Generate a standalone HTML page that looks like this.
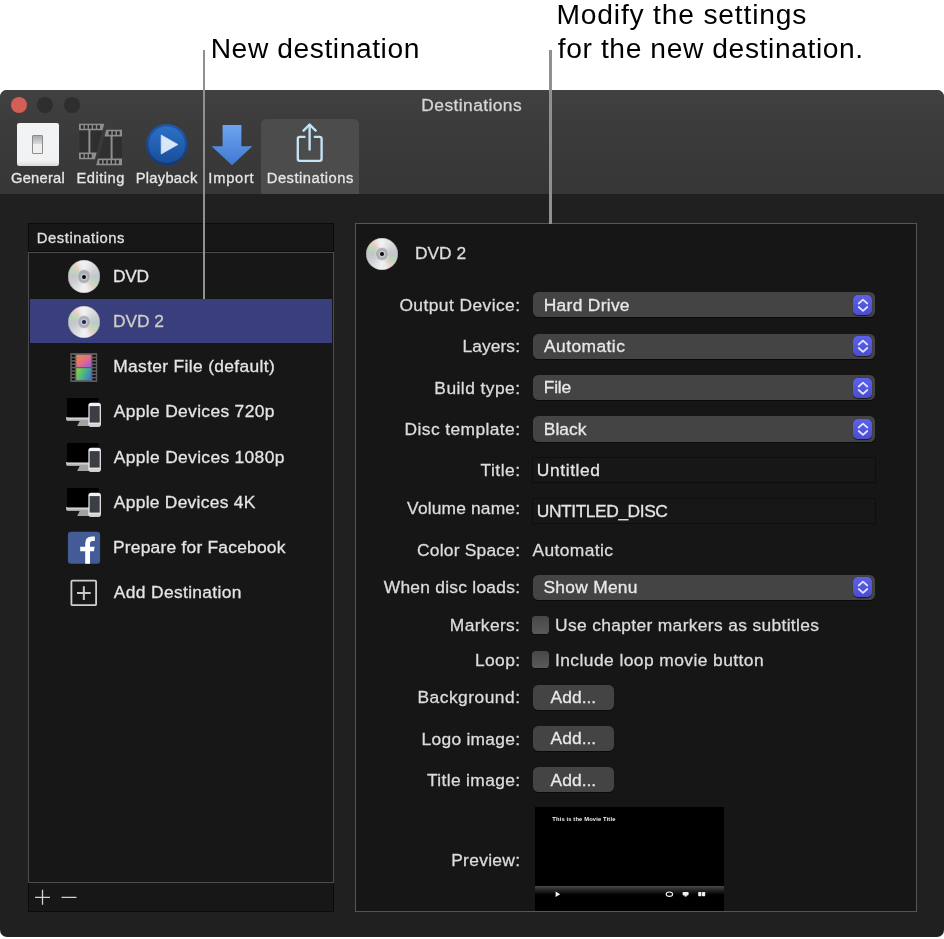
<!DOCTYPE html>
<html><head><meta charset="utf-8"><title>Destinations</title>
<style>
html,body{margin:0;padding:0;background:#fff;}
body{width:944px;height:939px;position:relative;overflow:hidden;font-family:"Liberation Sans",sans-serif;}
.t{position:absolute;white-space:nowrap;line-height:1;will-change:transform;}
.abs{position:absolute;}
#win{position:absolute;left:0;top:89.8px;width:944px;height:847.2px;background:#202020;border-radius:7px;overflow:hidden;}
#tb{position:absolute;left:0;top:0;width:944px;height:104.4px;background:linear-gradient(#414141,#3c3c3c 30%,#363636);}
.dot{position:absolute;width:16px;height:16px;border-radius:50%;}
#seltab{position:absolute;left:260.8px;top:119.2px;width:98.2px;height:75px;background:#4c4c4c;border-radius:5.5px 5.5px 0 0;}
#gen{position:absolute;left:16.8px;top:123.4px;width:42.4px;height:42.4px;border-radius:2.2px;background:linear-gradient(#f2f3f5 0%,#f1f2f4 88%,#d9dadc 100%);}
#sw{position:absolute;left:15.2px;top:11.4px;width:9px;height:17.4px;border:1px solid #8c8c8c;border-radius:1px;background:linear-gradient(#a9abad 0%,#d8d9da 45%,#efefef 50%,#efefef 100%);}
#lhead{position:absolute;left:28.3px;top:223.4px;width:305.6px;height:28.4px;box-sizing:border-box;background:#171717;border:1.2px solid #0b0b0b;}
#lbox{position:absolute;left:28.3px;top:251.8px;width:305.6px;height:631px;box-sizing:border-box;background:#171717;border:1.6px solid #4c4c4c;}
#lfoot{position:absolute;left:28.3px;top:882.8px;width:305.6px;height:29.2px;box-sizing:border-box;background:#171717;border:1.2px solid #0b0b0b;border-top:none;}
#selrow{position:absolute;left:29.6px;top:299.0px;width:302.9px;height:43.6px;background:#393e7c;}
.disc{position:absolute;width:32.4px;height:32.4px;border-radius:50%;
 background:conic-gradient(from 0deg,#f2f2f3 0deg,#e2e3e5 30deg,#cfd1d5 60deg,#c3c5ca 90deg,#b9d8bc 115deg,#e4cfc5 140deg,#ececee 165deg,#f0f0f1 185deg,#dcdde0 215deg,#cacccf 245deg,#c3c5ca 270deg,#b9d8bc 295deg,#e6cec2 320deg,#ededee 345deg,#f2f2f3 360deg);
 box-shadow:inset 0 0 0 0.6px rgba(120,120,130,0.55);}
.disc i{position:absolute;left:10px;top:10px;width:12.4px;height:12.4px;border-radius:50%;background:#abaeb5;box-shadow:0 0 0 0.8px #d6d8dc;}
.disc b{position:absolute;left:14.2px;top:14.2px;width:4px;height:4px;border-radius:50%;box-shadow:0 0 0 1.4px #c3c6cb;}
#panel{position:absolute;left:355.1px;top:223.1px;width:561.5px;height:689.1px;box-sizing:border-box;background:#161616;border:1.6px solid #555555;}
.pop{position:absolute;left:532.8px;width:342.2px;height:25.3px;border-radius:5.5px;background:#444444;box-shadow:0 1px 0.5px #0a0a0a;}
.stp{position:absolute;right:2.6px;top:2.7px;width:19.6px;height:20px;border-radius:5px;background:linear-gradient(#5c61ea,#4a4dd0);box-shadow:0 0.6px 0.8px rgba(0,0,0,0.6);}
.stp svg{position:absolute;left:-0.2px;top:0;}
.fld{position:absolute;left:532.0px;width:343.6px;height:25.6px;box-sizing:border-box;background:#171717;border:1.2px solid #0e0e0e;}
.cb{position:absolute;left:532.1px;width:17.2px;height:17.4px;border-radius:3.6px;background:linear-gradient(#474747,#5a5a5a);box-shadow:0 0.8px 0.6px #0a0a0a;}
.btn{position:absolute;left:532.8px;width:80.8px;height:24.6px;border-radius:5.5px;background:#444444;box-shadow:0 1px 0.5px #0a0a0a;}
#prev{position:absolute;left:535.2px;top:807.2px;width:188.8px;height:103.4px;background:#000;overflow:hidden;}
#pbar{position:absolute;left:0;top:79.2px;width:100%;height:9px;background:linear-gradient(#4a4a4a,#2c2c2c 35%,#000 100%);}
.cl{position:absolute;width:2.5px;background:#909090;}
</style></head>
<body>
<div class="t" style="left:210px;padding-left:0.69px;top:32px;line-height:32px;font-size:28.20px;letter-spacing:0.580px;color:#000;">New destination</div>
<div class="t" style="left:556px;padding-left:0.49px;top:-2px;line-height:32px;font-size:28.20px;letter-spacing:0.826px;color:#000;">Modify the settings</div>
<div class="t" style="left:557px;padding-left:0.80px;top:32px;line-height:32px;font-size:28.20px;letter-spacing:0.604px;color:#000;">for the new destination.</div>
<div id="win"><div id="tb"></div></div>
<div class="dot" style="left:10.6px;top:96.9px;background:#d35f54"></div>
<div class="dot" style="left:37.1px;top:96.9px;background:#2e2e2e"></div>
<div class="dot" style="left:63.6px;top:96.9px;background:#2e2e2e"></div>
<div class="t" style="left:421px;padding-left:0.37px;top:95px;line-height:20px;font-size:17.40px;letter-spacing:0.414px;color:#d6d6d6;-webkit-text-stroke:0.3px currentColor;">Destinations</div>
<div id="seltab"></div>
<div id="gen"><div id="sw"></div></div>
<svg class="abs" style="left:78px;top:122px" width="46" height="46" viewBox="78 122 46 46">
<g fill="#2f2f31">
<polygon points="79.5,124.5 104,124.5 95,159 79.5,159"/>
<polygon points="106,130.5 122,130.5 122,165 96.5,165"/>
</g>
<g fill="#8e8e8e">
<polygon points="79,123.8 104.3,123.8 102.6,130.2 79,130.2"/>
<polygon points="79,152.6 96.6,152.6 95,159.2 79,159.2"/>
<polygon points="106.2,129.8 122,129.8 122,136.4 104.5,136.4"/>
<polygon points="98,158.6 122,158.6 122,165.2 96.2,165.2"/>
<rect x="88.4" y="130" width="2" height="23"/>
<rect x="110.6" y="136" width="2" height="23"/>
</g>
<g fill="#2a2a2c">

<rect x="80.8" y="125.2" width="2.7" height="3.5"/><rect x="84.9" y="125.2" width="2.7" height="3.5"/><rect x="89.0" y="125.2" width="2.7" height="3.5"/><rect x="93.1" y="125.2" width="2.7" height="3.5"/><rect x="97.2" y="125.2" width="2.7" height="3.5"/>
<rect x="80.8" y="154.2" width="2.7" height="3.5"/><rect x="84.9" y="154.2" width="2.7" height="3.5"/><rect x="89.0" y="154.2" width="2.7" height="3.5"/>
<rect x="108.6" y="131.3" width="2.7" height="3.5"/><rect x="112.8" y="131.3" width="2.7" height="3.5"/><rect x="117.0" y="131.3" width="2.7" height="3.5"/>
<rect x="99.4" y="160.2" width="2.7" height="3.5"/><rect x="103.6" y="160.2" width="2.7" height="3.5"/><rect x="107.8" y="160.2" width="2.7" height="3.5"/><rect x="112.0" y="160.2" width="2.7" height="3.5"/><rect x="116.2" y="160.2" width="2.7" height="3.5"/>
</g></svg>
<svg class="abs" style="left:144px;top:122px" width="46" height="46" viewBox="144 122 46 46">
<defs><linearGradient id="pg" x1="0" y1="0" x2="0" y2="1"><stop offset="0" stop-color="#2d70c8"/><stop offset="1" stop-color="#194e9a"/></linearGradient>
<linearGradient id="pg2" x1="0" y1="0" x2="0" y2="1"><stop offset="0" stop-color="#1f5aae"/><stop offset="1" stop-color="#103a78"/></linearGradient></defs>
<circle cx="166.9" cy="144.7" r="20.7" fill="url(#pg2)"/>
<circle cx="166.9" cy="144.7" r="18.3" fill="url(#pg)"/>
<path d="M161.2 135 L177.9 144.5 L161.2 154 Z" fill="#d9e5fa" stroke="#d9e5fa" stroke-width="0.7" stroke-linejoin="round"/>
</svg>
<svg class="abs" style="left:208px;top:122px" width="48" height="46" viewBox="208 122 48 46">
<defs><linearGradient id="ig" x1="0" y1="0" x2="0" y2="1"><stop offset="0" stop-color="#6ea4ee"/><stop offset="1" stop-color="#4278d2"/></linearGradient></defs>
<path d="M222.6 125 H241.4 V146.2 H252.3 L232 165.2 L211.6 146.2 H222.6 Z" fill="url(#ig)"/>
</svg>
<svg class="abs" style="left:290px;top:120px" width="40" height="46" viewBox="290 120 40 46">
<g fill="none" stroke="#c4e4f6" stroke-width="2.35" stroke-linecap="round" stroke-linejoin="round">
<path d="M304.5 136.8 H299.8 Q297.8 136.8 297.8 138.8 V158.8 Q297.8 160.8 299.8 160.8 H319.6 Q321.6 160.8 321.6 158.8 V138.8 Q321.6 136.8 319.6 136.8 H314.8"/>
<path d="M309.6 149.6 V125.2"/>
<path d="M303.5 130.7 L309.6 124.6 L315.7 130.7"/>
</g></svg>
<div class="t" style="left:10px;padding-left:0.96px;top:170px;line-height:16px;font-size:14.70px;letter-spacing:0.260px;color:#e6e6e6;-webkit-text-stroke:0.3px currentColor;">General</div>
<div class="t" style="left:76px;padding-left:0.49px;top:170px;line-height:16px;font-size:14.70px;letter-spacing:0.505px;color:#e6e6e6;-webkit-text-stroke:0.3px currentColor;">Editing</div>
<div class="t" style="left:135px;padding-left:0.69px;top:170px;line-height:16px;font-size:14.70px;letter-spacing:0.282px;color:#e6e6e6;-webkit-text-stroke:0.3px currentColor;">Playback</div>
<div class="t" style="left:208px;padding-left:0.34px;top:170px;line-height:16px;font-size:14.70px;letter-spacing:0.748px;color:#e6e6e6;-webkit-text-stroke:0.3px currentColor;">Import</div>
<div class="t" style="left:266px;padding-left:0.79px;top:170px;line-height:16px;font-size:14.70px;letter-spacing:0.518px;color:#e6e6e6;-webkit-text-stroke:0.3px currentColor;">Destinations</div>
<div id="lhead"></div><div id="lbox"></div><div id="lfoot"></div><div id="selrow"></div>
<div class="t" style="left:36px;padding-left:0.79px;top:230px;line-height:16px;font-size:14.80px;letter-spacing:0.572px;color:#e0e0e0;-webkit-text-stroke:0.3px currentColor;">Destinations</div>
<div class="disc" style="left:67.70px;top:260.40px"><i></i><b style="background:#0c0c0c"></b></div>
<div class="disc" style="left:67.70px;top:305.50px"><i></i><b style="background:#1d2150"></b></div>
<div class="t" style="left:112px;padding-left:0.97px;top:266px;line-height:20px;font-size:17.40px;letter-spacing:-0.279px;color:#e4e4e4;-webkit-text-stroke:0.3px currentColor;">DVD</div>
<div class="t" style="left:112px;padding-left:0.97px;top:311px;line-height:20px;font-size:17.40px;letter-spacing:-0.054px;color:#cfcdc6;-webkit-text-stroke:0.3px currentColor;">DVD 2</div>
<div class="t" style="left:113px;padding-left:0.27px;top:356px;line-height:20px;font-size:17.40px;letter-spacing:0.339px;color:#e4e4e4;-webkit-text-stroke:0.3px currentColor;">Master File (default)</div>
<div class="t" style="left:113px;padding-left:0.87px;top:401px;line-height:20px;font-size:17.40px;letter-spacing:0.340px;color:#e4e4e4;-webkit-text-stroke:0.3px currentColor;">Apple Devices 720p</div>
<div class="t" style="left:113px;padding-left:0.87px;top:447px;line-height:20px;font-size:17.40px;letter-spacing:0.339px;color:#e4e4e4;-webkit-text-stroke:0.3px currentColor;">Apple Devices 1080p</div>
<div class="t" style="left:113px;padding-left:0.87px;top:492px;line-height:20px;font-size:17.40px;letter-spacing:0.278px;color:#e4e4e4;-webkit-text-stroke:0.3px currentColor;">Apple Devices 4K</div>
<div class="t" style="left:112px;padding-left:0.97px;top:537px;line-height:20px;font-size:17.40px;letter-spacing:0.225px;color:#e4e4e4;-webkit-text-stroke:0.3px currentColor;">Prepare for Facebook</div>
<div class="t" style="left:113px;padding-left:0.87px;top:582px;line-height:20px;font-size:17.40px;letter-spacing:0.343px;color:#e4e4e4;-webkit-text-stroke:0.3px currentColor;">Add Destination</div>
<svg class="abs" style="left:68px;top:351px" width="32" height="33" viewBox="68 351 32 33">
<defs>
<linearGradient id="m1" x1="0" y1="0" x2="1" y2="1"><stop offset="0" stop-color="#f08a3c"/><stop offset="0.55" stop-color="#e06c8c"/><stop offset="1" stop-color="#9a58d8"/></linearGradient>
<linearGradient id="m2" x1="0" y1="0.3" x2="1" y2="0.7"><stop offset="0" stop-color="#8ccc4c"/><stop offset="0.45" stop-color="#4cba7c"/><stop offset="1" stop-color="#3c78d4"/></linearGradient>
</defs>
<rect x="70.3" y="353.1" width="26.9" height="28.8" fill="#5e5e5e"/>
<rect x="76.4" y="354.8" width="14.8" height="12.2" fill="url(#m1)"/>
<rect x="76.4" y="368.2" width="14.8" height="11.9" fill="url(#m2)"/>
<g fill="#0a0a0a">
<rect x="71.8" y="355.00" width="3.2" height="1.7"/><rect x="92.6" y="355.00" width="3.2" height="1.7"/>
<rect x="71.8" y="358.36" width="3.2" height="1.7"/><rect x="92.6" y="358.36" width="3.2" height="1.7"/>
<rect x="71.8" y="361.72" width="3.2" height="1.7"/><rect x="92.6" y="361.72" width="3.2" height="1.7"/>
<rect x="71.8" y="365.08" width="3.2" height="1.7"/><rect x="92.6" y="365.08" width="3.2" height="1.7"/>
<rect x="71.8" y="368.44" width="3.2" height="1.7"/><rect x="92.6" y="368.44" width="3.2" height="1.7"/>
<rect x="71.8" y="371.80" width="3.2" height="1.7"/><rect x="92.6" y="371.80" width="3.2" height="1.7"/>
<rect x="71.8" y="375.16" width="3.2" height="1.7"/><rect x="92.6" y="375.16" width="3.2" height="1.7"/>
<rect x="71.8" y="378.52" width="3.2" height="1.7"/><rect x="92.6" y="378.52" width="3.2" height="1.7"/>
</g></svg>
<svg class="abs" style="left:64px;top:395.00px" width="40" height="34" viewBox="64 395 40 34">
<defs><linearGradient id="ch0" x1="0" y1="0" x2="0" y2="1"><stop offset="0" stop-color="#f2f2f2"/><stop offset="1" stop-color="#9c9c9c"/></linearGradient></defs>
<path d="M77.2 425.9 L79.9 420.6 H90 V425.9 Z" fill="#a2a2a2"/>
<path d="M66.2 417 H98.4 V419.6 Q98.4 420.9 97.1 420.9 H67.5 Q66.2 420.9 66.2 419.6 Z" fill="url(#ch0)"/>
<rect x="66.9" y="398" width="31.7" height="19.6" rx="0.8" fill="#000"/>
<rect x="88.4" y="402.8" width="12.5" height="24" rx="2.8" fill="#f2f2f2"/>
<rect x="88.9" y="423.4" width="11.5" height="3.4" rx="1.6" fill="#d4d4d4"/>
<rect x="89.6" y="406.1" width="10.1" height="16.5" fill="#3b3e44"/>
</svg>
<svg class="abs" style="left:64px;top:440.20px" width="40" height="34" viewBox="64 395 40 34">
<defs><linearGradient id="ch45" x1="0" y1="0" x2="0" y2="1"><stop offset="0" stop-color="#f2f2f2"/><stop offset="1" stop-color="#9c9c9c"/></linearGradient></defs>
<path d="M77.2 425.9 L79.9 420.6 H90 V425.9 Z" fill="#a2a2a2"/>
<path d="M66.2 417 H98.4 V419.6 Q98.4 420.9 97.1 420.9 H67.5 Q66.2 420.9 66.2 419.6 Z" fill="url(#ch45)"/>
<rect x="66.9" y="398" width="31.7" height="19.6" rx="0.8" fill="#000"/>
<rect x="88.4" y="402.8" width="12.5" height="24" rx="2.8" fill="#f2f2f2"/>
<rect x="88.9" y="423.4" width="11.5" height="3.4" rx="1.6" fill="#d4d4d4"/>
<rect x="89.6" y="406.1" width="10.1" height="16.5" fill="#3b3e44"/>
</svg>
<svg class="abs" style="left:64px;top:485.40px" width="40" height="34" viewBox="64 395 40 34">
<defs><linearGradient id="ch90" x1="0" y1="0" x2="0" y2="1"><stop offset="0" stop-color="#f2f2f2"/><stop offset="1" stop-color="#9c9c9c"/></linearGradient></defs>
<path d="M77.2 425.9 L79.9 420.6 H90 V425.9 Z" fill="#a2a2a2"/>
<path d="M66.2 417 H98.4 V419.6 Q98.4 420.9 97.1 420.9 H67.5 Q66.2 420.9 66.2 419.6 Z" fill="url(#ch90)"/>
<rect x="66.9" y="398" width="31.7" height="19.6" rx="0.8" fill="#000"/>
<rect x="88.4" y="402.8" width="12.5" height="24" rx="2.8" fill="#f2f2f2"/>
<rect x="88.9" y="423.4" width="11.5" height="3.4" rx="1.6" fill="#d4d4d4"/>
<rect x="89.6" y="406.1" width="10.1" height="16.5" fill="#3b3e44"/>
</svg>
<svg class="abs" style="left:66px;top:530px" width="36" height="36" viewBox="66 530 36 36">
<rect x="67.9" y="531.7" width="32.2" height="32.1" rx="3.2" fill="#435b97"/>
<path d="M85.2 563.8 V551.2 H80.2 V546.8 H85.2 V543.4 Q85.2 536.4 92 536.4 H94.8 V540.9 H92.6 Q90 540.9 90 543.4 V546.8 H94.6 L93.9 551.2 H90 V563.8 Z" fill="#fff"/>
</svg>
<svg class="abs" style="left:68px;top:577px" width="32" height="32" viewBox="68 577 32 32">
<rect x="71.4" y="580.7" width="24.7" height="24.5" rx="1" fill="none" stroke="#cfcfcf" stroke-width="1.8"/>
<path d="M77 593.1 H90.7 M83.85 586.3 V599.9" stroke="#c8c8c8" stroke-width="2" fill="none"/>
</svg>
<svg class="abs" style="left:30px;top:884px" width="60" height="27" viewBox="30 884 60 27">
<path d="M35 897.3 H50 M42.5 889.8 V904.8 M61.5 897.3 H76.5" stroke="#d0d0d0" stroke-width="1.3" fill="none"/>
</svg>
<div id="panel"></div>
<div class="disc" style="left:365.60px;top:237.60px"><i></i><b style="background:#0c0c0c"></b></div>
<div class="t" style="left:414px;padding-left:0.97px;top:243px;line-height:20px;font-size:17.40px;letter-spacing:-0.029px;color:#dcdcdc;-webkit-text-stroke:0.3px currentColor;">DVD 2</div>
<div class="t" style="left:399px;padding-left:0.38px;top:295px;line-height:20px;font-size:17.40px;letter-spacing:0.429px;color:#dcdcdc;-webkit-text-stroke:0.3px currentColor;">Output Device:</div>
<div class="t" style="left:462px;padding-left:0.47px;top:336px;line-height:20px;font-size:17.40px;letter-spacing:0.078px;color:#dcdcdc;-webkit-text-stroke:0.3px currentColor;">Layers:</div>
<div class="t" style="left:434px;padding-left:0.37px;top:378px;line-height:20px;font-size:17.40px;letter-spacing:0.443px;color:#dcdcdc;-webkit-text-stroke:0.3px currentColor;">Build type:</div>
<div class="t" style="left:404px;padding-left:0.57px;top:419px;line-height:20px;font-size:17.40px;letter-spacing:0.403px;color:#dcdcdc;-webkit-text-stroke:0.3px currentColor;">Disc template:</div>
<div class="t" style="left:480px;padding-left:0.51px;top:460px;line-height:20px;font-size:17.40px;letter-spacing:0.490px;color:#dcdcdc;-webkit-text-stroke:0.3px currentColor;">Title:</div>
<div class="t" style="left:407px;padding-left:0.12px;top:498px;line-height:20px;font-size:17.40px;letter-spacing:0.155px;color:#dcdcdc;-webkit-text-stroke:0.3px currentColor;">Volume name:</div>
<div class="t" style="left:417px;padding-left:0.02px;top:540px;line-height:20px;font-size:17.40px;letter-spacing:0.222px;color:#dcdcdc;-webkit-text-stroke:0.3px currentColor;">Color Space:</div>
<div class="t" style="left:383px;padding-left:0.72px;top:577px;line-height:20px;font-size:17.40px;letter-spacing:0.255px;color:#dcdcdc;-webkit-text-stroke:0.3px currentColor;">When disc loads:</div>
<div class="t" style="left:449px;padding-left:0.87px;top:615px;line-height:20px;font-size:17.40px;letter-spacing:0.351px;color:#dcdcdc;-webkit-text-stroke:0.3px currentColor;">Markers:</div>
<div class="t" style="left:475px;padding-left:0.07px;top:650px;line-height:20px;font-size:17.40px;letter-spacing:0.350px;color:#dcdcdc;-webkit-text-stroke:0.3px currentColor;">Loop:</div>
<div class="t" style="left:417px;padding-left:0.47px;top:687px;line-height:20px;font-size:17.40px;letter-spacing:0.486px;color:#dcdcdc;-webkit-text-stroke:0.3px currentColor;">Background:</div>
<div class="t" style="left:421px;padding-left:0.57px;top:729px;line-height:20px;font-size:17.40px;letter-spacing:0.271px;color:#dcdcdc;-webkit-text-stroke:0.3px currentColor;">Logo image:</div>
<div class="t" style="left:427px;padding-left:0.01px;top:770px;line-height:20px;font-size:17.40px;letter-spacing:0.342px;color:#dcdcdc;-webkit-text-stroke:0.3px currentColor;">Title image:</div>
<div class="t" style="left:451px;padding-left:0.17px;top:850px;line-height:20px;font-size:17.40px;letter-spacing:0.304px;color:#dcdcdc;-webkit-text-stroke:0.3px currentColor;">Preview:</div>
<div class="pop" style="top:292.2px"><div class="stp"><svg width="20" height="20" viewBox="0 0 20 20"><path d="M5.7 8.5 L10 4.7 L14.3 8.5 M5.7 12 L10 15.9 L14.3 12" fill="none" stroke="#e4e4ff" stroke-width="1.7" stroke-linecap="round" stroke-linejoin="round"/></svg></div></div>
<div class="t" style="left:543px;padding-left:0.77px;top:295px;line-height:20px;font-size:17.40px;letter-spacing:0.297px;color:#e8e8e8;-webkit-text-stroke:0.3px currentColor;">Hard Drive</div>
<div class="pop" style="top:333.8px"><div class="stp"><svg width="20" height="20" viewBox="0 0 20 20"><path d="M5.7 8.5 L10 4.7 L14.3 8.5 M5.7 12 L10 15.9 L14.3 12" fill="none" stroke="#e4e4ff" stroke-width="1.7" stroke-linecap="round" stroke-linejoin="round"/></svg></div></div>
<div class="t" style="left:543px;padding-left:0.97px;top:336px;line-height:20px;font-size:17.40px;letter-spacing:0.448px;color:#e8e8e8;-webkit-text-stroke:0.3px currentColor;">Automatic</div>
<div class="pop" style="top:375.2px"><div class="stp"><svg width="20" height="20" viewBox="0 0 20 20"><path d="M5.7 8.5 L10 4.7 L14.3 8.5 M5.7 12 L10 15.9 L14.3 12" fill="none" stroke="#e4e4ff" stroke-width="1.7" stroke-linecap="round" stroke-linejoin="round"/></svg></div></div>
<div class="t" style="left:543px;padding-left:0.77px;top:377px;line-height:20px;font-size:17.40px;letter-spacing:-0.238px;color:#e8e8e8;-webkit-text-stroke:0.3px currentColor;">File</div>
<div class="pop" style="top:416.4px"><div class="stp"><svg width="20" height="20" viewBox="0 0 20 20"><path d="M5.7 8.5 L10 4.7 L14.3 8.5 M5.7 12 L10 15.9 L14.3 12" fill="none" stroke="#e4e4ff" stroke-width="1.7" stroke-linecap="round" stroke-linejoin="round"/></svg></div></div>
<div class="t" style="left:543px;padding-left:0.77px;top:419px;line-height:20px;font-size:17.40px;letter-spacing:0.068px;color:#e8e8e8;-webkit-text-stroke:0.3px currentColor;">Black</div>
<div class="pop" style="top:574.5px"><div class="stp"><svg width="20" height="20" viewBox="0 0 20 20"><path d="M5.7 8.5 L10 4.7 L14.3 8.5 M5.7 12 L10 15.9 L14.3 12" fill="none" stroke="#e4e4ff" stroke-width="1.7" stroke-linecap="round" stroke-linejoin="round"/></svg></div></div>
<div class="t" style="left:543px;padding-left:0.51px;top:577px;line-height:20px;font-size:17.40px;letter-spacing:0.265px;color:#e8e8e8;-webkit-text-stroke:0.3px currentColor;">Show Menu</div>
<div class="fld" style="top:457.3px"></div><div class="fld" style="top:498.4px"></div>
<div class="t" style="left:536px;padding-left:0.86px;top:460px;line-height:20px;font-size:17.40px;letter-spacing:0.587px;color:#e4e4e4;-webkit-text-stroke:0.3px currentColor;">Untitled</div>
<div class="t" style="left:536px;padding-left:0.86px;top:501px;line-height:20px;font-size:17.40px;letter-spacing:-0.437px;color:#e4e4e4;-webkit-text-stroke:0.3px currentColor;">UNTITLED_DISC</div>
<div class="t" style="left:532px;padding-left:0.57px;top:540px;line-height:20px;font-size:17.40px;letter-spacing:0.373px;color:#dcdcdc;-webkit-text-stroke:0.3px currentColor;">Automatic</div>
<div class="cb" style="top:616.4px"></div><div class="cb" style="top:650.8px"></div>
<div class="t" style="left:555px;padding-left:0.06px;top:615px;line-height:20px;font-size:17.40px;letter-spacing:0.345px;color:#dcdcdc;-webkit-text-stroke:0.3px currentColor;">Use chapter markers as subtitles</div>
<div class="t" style="left:554px;padding-left:0.99px;top:650px;line-height:20px;font-size:17.40px;letter-spacing:0.436px;color:#dcdcdc;-webkit-text-stroke:0.3px currentColor;">Include loop movie button</div>
<div class="btn" style="top:685.0px"></div>
<div class="t" style="left:550px;padding-left:0.57px;top:687px;line-height:20px;font-size:17.40px;letter-spacing:0.040px;color:#e8e8e8;-webkit-text-stroke:0.3px currentColor;">Add...</div>
<div class="btn" style="top:726.3px"></div>
<div class="t" style="left:550px;padding-left:0.57px;top:728px;line-height:20px;font-size:17.40px;letter-spacing:0.040px;color:#e8e8e8;-webkit-text-stroke:0.3px currentColor;">Add...</div>
<div class="btn" style="top:767.3px"></div>
<div class="t" style="left:550px;padding-left:0.57px;top:770px;line-height:20px;font-size:17.40px;letter-spacing:0.040px;color:#e8e8e8;-webkit-text-stroke:0.3px currentColor;">Add...</div>
<div id="prev"><div id="pbar"></div></div>
<div class="t" style="left:552px;padding-left:0.33px;top:816px;line-height:6px;font-size:5.80px;letter-spacing:0.134px;color:#f0f0f0;font-weight:bold;filter:blur(0.35px);">This is the Movie Title</div>
<svg class="abs" style="left:550px;top:888px;filter:blur(0.35px)" width="170" height="12" viewBox="550 888 170 12">
<path d="M555.6 891.4 L560.2 894.2 L555.6 897 Z" fill="#f4f4f4"/>
<ellipse cx="669.4" cy="894.2" rx="3.2" ry="2.2" fill="none" stroke="#f0f0f0" stroke-width="1.1"/>
<rect x="682.6" y="892" width="6" height="3.4" rx="0.8" fill="#f0f0f0"/><rect x="684.6" y="895" width="2" height="1.6" fill="#f0f0f0"/>
<rect x="698.2" y="892" width="3.2" height="4.2" rx="0.6" fill="#f0f0f0"/><rect x="702" y="892" width="3.2" height="4.2" rx="0.6" fill="#f0f0f0"/>
</svg>
<div class="cl" style="left:202.9px;top:50.0px;height:248.8px"></div>
<div class="cl" style="left:549.1px;top:49.8px;height:174px"></div>
</body></html>
